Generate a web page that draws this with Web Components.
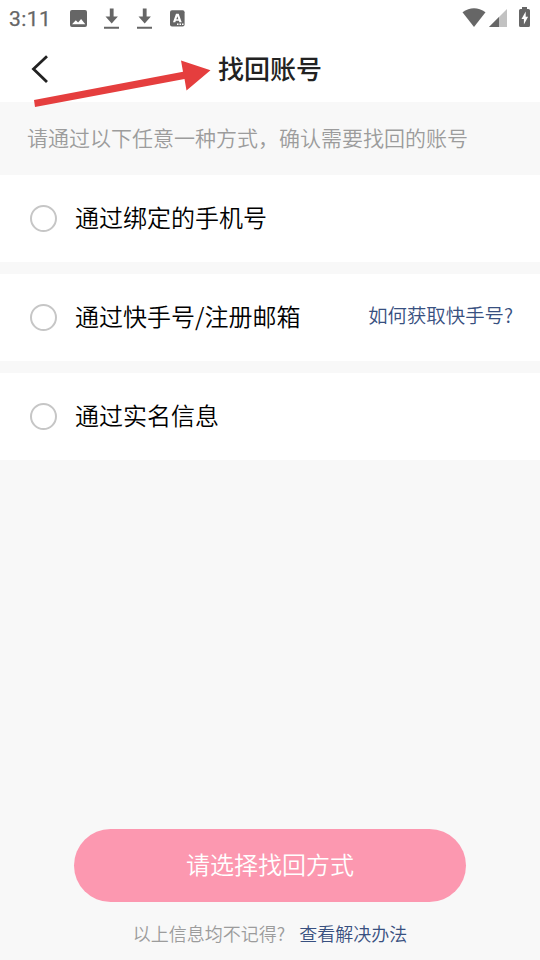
<!DOCTYPE html>
<html lang="zh-CN">
<head>
<meta charset="utf-8">
<title>找回账号</title>
<style>
html,body{margin:0;height:100%;background:#f8f8f8}
body{font-family:"Noto Sans CJK SC",sans-serif;font-weight:350;overflow:hidden}
</style>
</head>
<body>
<recover-page></recover-page>
<script>
function define(name, html) {
  const tpl = document.createElement('template');
  tpl.innerHTML = html;
  customElements.define(name, class extends HTMLElement {
    constructor() {
      super();
      this.attachShadow({mode: 'open'}).append(tpl.content.cloneNode(true));
    }
  });
}

define('status-bar', `
<style>
:host{display:flex;justify-content:space-between;height:37px;background:#fff;color:#666}
time{font:400 21px/38px Roboto,sans-serif;letter-spacing:.4px;padding-left:9px;width:51px;-webkit-text-stroke:.25px #666}
.left{display:flex}
svg{display:block}
</style>
<div class="left"><time>3:11</time>
<svg width="140" height="37" viewBox="60 0 140 37" fill="#666">
  <path fill-rule="evenodd" d="M72 10h13q2 0 2 2v13q0 2-2 2h-13q-2 0-2-2v-13q0-2 2-2zM72 24.300h13.300l-4.200-5.300-3 3.600-2.300-2.300z"/>
  <path d="M109.800 8.500h3.800v8h4.300l-6.200 7-6.200-7h4.300zM104 26.700h15v2h-15z"/>
  <path d="M142.800 8.500h3.800v8h4.300l-6.200 7-6.200-7h4.300zM137 26.700h15v2h-15z"/>
  <rect x="170" y="10.300" width="14.600" height="16.300" rx="2"/>
  <path fill="#fff" fill-rule="evenodd" d="M176 13.800h2.700l3 8.400h-2.300l-.5-1.500h-3.100l-.5 1.500h-2.300zM177.350 16.300l-1 2.900h2z"/>
  <path d="M177 23.500h1.500v1.500h-1.500zM179.500 23.500h1.500v1.500h-1.500zM182 23.500h1.500v1.500h-1.500z" fill="#fff"/>
</svg></div>
<svg width="100" height="37" viewBox="440 0 100 37" fill="#666">
  <path d="M462.500 12.200Q474 4.500 485.500 12.200L474 27z"/>
  <path d="M507 9v18h-18z" fill="#c2c2c2"/><path d="M499 17v10h-10z"/>
  <path fill-rule="evenodd" d="M522 7h5v2h1.500q1.500 0 1.500 1.500v15q0 1.500-1.500 1.500h-8q-1.500 0-1.500-1.500v-15q0-1.500 1.500-1.500h1.500zM525.700 11.500l-4.200 7.500h2.400v5.500l4.200-7.800h-2.400z"/>
</svg>`);

define('page-header', `
<style>
:host{display:grid;grid-template-columns:70px 1fr 70px;align-items:center;height:65px;background:#fff;position:relative}
h1{margin:0;text-align:center;font-size:26px;line-height:60px;padding-bottom:3px;font-weight:500;color:#222}
.arrow{position:absolute;left:0;top:0;z-index:1}
</style>
<svg width="70" height="65" fill="none" stroke="#222" stroke-width="2.800"><path d="M47 19.300L33.500 32l13.500 13"/></svg>
<h1><slot></slot></h1>
<svg class="arrow" width="220" height="75" fill="#e53e3e"><path d="M34 63L183 34.700L181 23.500L210.500 33.300L186.500 53.500L184.500 42L35 70z"/></svg>`);

define('option-row', `
<style>
:host{display:flex;align-items:center;box-sizing:border-box;height:87px;padding:0 27px 0 30px;background:#fff;color:#000;font-size:24px}
i{box-sizing:border-box;width:27px;height:27px;border:2px solid #c6c6c6;border-radius:50%;margin-right:18px}
span{flex:1;line-height:36px;padding-bottom:4px}
::slotted(a){font-size:19.400px;color:#385080;line-height:36px;padding-bottom:6px}
</style>
<i></i><span><slot></slot></span><slot name="help"></slot>`);

define('pill-button', `
<style>
:host{display:block;width:392px;height:73px}
button{display:block;width:100%;height:100%;border:0;border-radius:37px;background:#fc98b0;color:#fff;font:inherit;font-size:24px;line-height:36px;padding:0 0 4px}
</style>
<button><slot></slot></button>`);

define('recover-page', `
<style>
:host{display:flex;flex-direction:column;height:960px;width:540px;background:#f8f8f8}
.hint{box-sizing:border-box;height:73px;line-height:71px;margin:0;padding-left:27px;font-size:21px;color:#9c9c9c}
.list{display:flex;flex-direction:column;gap:12px}
footer{margin-top:auto;display:flex;flex-direction:column;align-items:center}
.foot{height:58px;line-height:63px;margin:0;font-size:18px;color:#9c9c9c;display:flex;gap:14px}
.foot a{color:#385080}
</style>
<status-bar></status-bar>
<page-header>找回账号</page-header>
<p class="hint">请通过以下任意一种方式，确认需要找回的账号</p>
<div class="list">
<option-row>通过绑定的手机号</option-row>
<option-row>通过快手号/注册邮箱<a slot="help">如何获取快手号?</a></option-row>
<option-row>通过实名信息</option-row>
</div>
<footer><pill-button>请选择找回方式</pill-button>
<p class="foot"><span>以上信息均不记得?</span><a>查看解决办法</a></p></footer>`);
</script>
</body>
</html>
